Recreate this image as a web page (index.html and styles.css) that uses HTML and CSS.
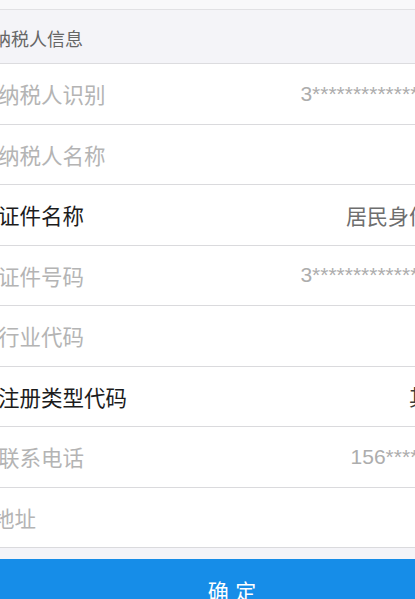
FILE: index.html
```html
<!DOCTYPE html>
<html lang="zh-CN">
<head>
<meta charset="utf-8">
<title>纳税人信息</title>
<link rel="stylesheet" href="styles.css">
</head>
<body>
<div class="page">
  <div class="top-gap"></div>
  <div class="section-head">纳税人信息</div>
  <div class="list">
    <div class="row"><span class="label ph">纳税人识别</span><span class="value num">3*****************</span></div>
    <div class="row"><span class="label ph">纳税人名称</span><span class="value"></span></div>
    <div class="row"><span class="label">证件名称</span><span class="value sel">居民身份证</span></div>
    <div class="row"><span class="label ph">证件号码</span><span class="value num">3*****************</span></div>
    <div class="row"><span class="label ph">行业代码</span><span class="value"></span></div>
    <div class="row"><span class="label">注册类型代码</span><span class="value sel dark">其他</span></div>
    <div class="row"><span class="label ph">联系电话</span><span class="value num">156********</span></div>
    <div class="row"><span class="label ph area">地址</span><span class="value"></span></div>
  </div>
  <div class="bottom-gap"></div>
  <div class="btn">确 定</div>
</div>
</body>
</html>
```
FILE: styles.css
```css
html, body {
  margin: 0;
  padding: 0;
}
body {
  width: 415px;
  height: 599px;
  overflow: hidden;
  background: #f8f8fa;
  font-family: "Noto Sans CJK SC", "Noto Sans", sans-serif;
}
.page {
  width: 475px;
  margin-left: -10px;
}
.top-gap {
  height: 9px;
  background: #f8f8fa;
  border-bottom: 1px solid #e1e1e4;
}
.section-head {
  box-sizing: border-box;
  height: 54px;
  padding: 3px 0 0 3px;
  display: flex;
  align-items: center;
  background: #f4f4f8;
  color: #666;
  font-size: 18px;
  border-bottom: 1px solid #dcdcdf;
}
.list {
  background: #fff;
}
.row {
  box-sizing: border-box;
  height: 60.5px;
  display: flex;
  align-items: center;
  justify-content: space-between;
  padding: 0 14px 0 8px;
  border-bottom: 1px solid #dadadd;
  background: #fff;
}
.label {
  font-size: 21.5px;
  color: #1c1c1c;
  white-space: nowrap;
}
.label.ph {
  color: #b4b4b4;
}
.label.area {
  margin-left: -5px;
}
.value {
  font-size: 21px;
  white-space: nowrap;
  color: #adadad;
}
.value.num {
  font-family: "Liberation Sans", "Noto Sans CJK SC", sans-serif;
}
.value.sel {
  color: #6e6e6e;
}
.value.dark {
  color: #3c3c3c;
}
.bottom-gap {
  height: 11px;
  background: #f4f4f8;
}
.btn {
  height: 62px;
  display: flex;
  align-items: center;
  justify-content: center;
  padding-left: 10px;
  background: #168de8;
  color: #fff;
  font-size: 21px;
  letter-spacing: 1px;
}
```
